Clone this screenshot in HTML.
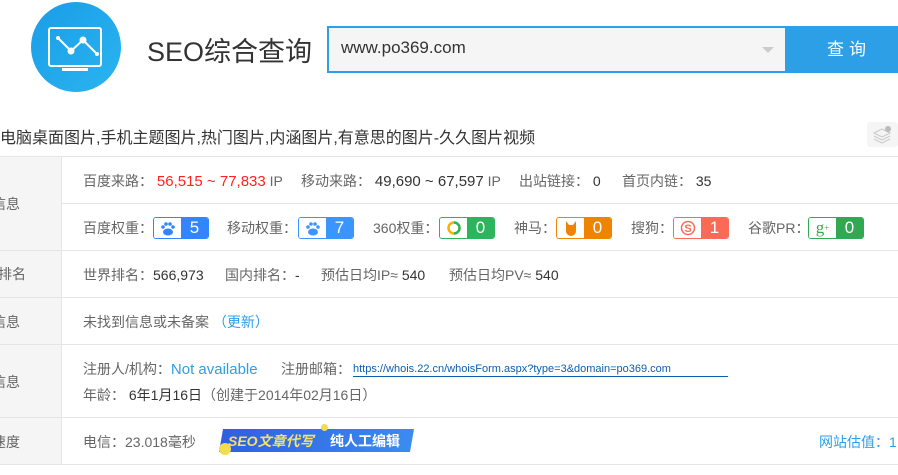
<!DOCTYPE html>
<html><head><meta charset="utf-8"><style>
*{margin:0;padding:0;box-sizing:border-box}
body{width:898px;height:475px;overflow:hidden;background:#fff;font-family:"Liberation Sans","Noto Sans CJK SC",sans-serif;color:#666;font-size:14px;position:relative}
.a{position:absolute;white-space:nowrap}
.hl{position:absolute;left:0;width:898px;height:1px;background:#e5e5e5}
.v{color:#333}
.badge{position:absolute;height:22px;width:56px;border:1px solid;border-radius:3px;overflow:hidden;display:flex}
.badge .i{width:27px;background:#fff;display:flex;align-items:center;justify-content:center}
.badge .n{flex:1;color:#fff;font-size:17px;text-align:center;line-height:20px}
.lab{position:absolute;font-size:14px;color:#666}
</style></head><body>
<!-- logo -->
<div class="a" style="left:31px;top:2px;width:90px;height:90px;border-radius:50%;background:linear-gradient(135deg,#1a9de8,#2ab4ef)"></div>
<svg class="a" style="left:31px;top:2px" width="90" height="90" viewBox="0 0 90 90">
<rect x="18" y="26" width="52" height="38" rx="2" fill="none" stroke="#fff" stroke-width="2"/>
<path d="M31 66h26v3H31z" fill="#fff"/>
<polyline points="27,36 40,49 52,38 66,52" fill="none" stroke="#fff" stroke-width="2"/>
<circle cx="27" cy="36" r="2" fill="#fff"/><circle cx="40" cy="49" r="3.5" fill="#fff"/><circle cx="52" cy="38" r="3.5" fill="#fff"/><circle cx="66" cy="52" r="2" fill="#fff"/>
</svg>
<div class="a" style="left:147px;top:30px;font-size:27px;color:#333">SEO综合查询</div>
<div class="a" style="left:327px;top:26px;width:462px;height:47px;border:2px solid #2d9fe6;background:#f5f5f5"></div>
<div class="a" style="left:341px;top:38px;font-size:17px;color:#333">www.po369.com</div>
<div class="a" style="left:762px;top:47px;width:0;height:0;border-left:6px solid transparent;border-right:6px solid transparent;border-top:6px solid #ccc"></div>
<div class="a" style="left:785px;top:26px;width:113px;height:47px;background:#2d9fe6;color:#fff;font-size:17px;line-height:47px;padding-left:42px;letter-spacing:5px">查询</div>
<div class="a" style="left:0;top:124px;font-size:16px;color:#333">电脑桌面图片,手机主题图片,热门图片,内涵图片,有意思的图片-久久图片视频</div>
<div class="a" style="left:867px;top:122px;width:31px;height:25px;background:#f5f5f5;border-radius:3px"></div>
<svg class="a" style="left:872px;top:125px" width="20" height="20" viewBox="0 0 20 20"><path d="M2 8l8-4 8 4-8 4z M2 11l8 4 8-4 M2 14l8 4 8-4" fill="none" stroke="#ccc" stroke-width="1.2"/><circle cx="16" cy="4" r="3" fill="#bbb"/></svg>
<!-- table -->
<div class="a" style="left:0;top:156px;width:62px;height:308px;background:#f5f5f5;border-right:1px solid #e5e5e5"></div>
<div class="hl" style="top:156px"></div>
<div class="hl" style="top:203px;left:62px"></div>
<div class="hl" style="top:250px"></div>
<div class="hl" style="top:297px"></div>
<div class="hl" style="top:344px"></div>
<div class="hl" style="top:417px"></div>
<div class="hl" style="top:464px"></div>
<div class="lab" style="left:-8px;top:194px">信息</div>
<div class="lab" style="left:-2px;top:264px">排名</div>
<div class="lab" style="left:-8px;top:312px">信息</div>
<div class="lab" style="left:-8px;top:372px">信息</div>
<div class="lab" style="left:-8px;top:432px">速度</div>
<!-- row1 -->
<div class="a" style="left:83px;top:171px">百度来路： <span style="color:#f22;font-size:15px">56,515 ~ 77,833</span> IP</div>
<div class="a" style="left:301px;top:171px">移动来路： <span class="v" style="font-size:15px">49,690 ~ 67,597</span> IP</div>
<div class="a" style="left:519px;top:171px">出站链接： <span class="v">0</span></div>
<div class="a" style="left:622px;top:171px">首页内链： <span class="v">35</span></div>
<!-- row2 -->
<div class="a" style="left:83px;top:218px">百度权重：</div>
<div class="badge" style="left:153px;top:217px;border-color:#3385ff"><div class="i"><svg width="16" height="15" viewBox="0 0 16 15"><ellipse cx="8" cy="11" rx="5" ry="3.5" fill="#3385ff"/><circle cx="3" cy="6" r="1.8" fill="#3385ff"/><circle cx="6" cy="3" r="1.8" fill="#3385ff"/><circle cx="10" cy="3" r="1.8" fill="#3385ff"/><circle cx="13" cy="6" r="1.8" fill="#3385ff"/></svg></div><div class="n" style="background:#3385ff">5</div></div>
<div class="a" style="left:227px;top:218px">移动权重：</div>
<div class="badge" style="left:298px;top:217px;border-color:#3a95ff"><div class="i"><svg width="16" height="15" viewBox="0 0 16 15"><ellipse cx="8" cy="11" rx="5" ry="3.5" fill="#3a95ff"/><circle cx="3" cy="6" r="1.8" fill="#3a95ff"/><circle cx="6" cy="3" r="1.8" fill="#3a95ff"/><circle cx="10" cy="3" r="1.8" fill="#3a95ff"/><circle cx="13" cy="6" r="1.8" fill="#3a95ff"/></svg></div><div class="n" style="background:#3a95ff">7</div></div>
<div class="a" style="left:373px;top:218px">360权重：</div>
<div class="badge" style="left:439px;top:217px;border-color:#2db55d"><div class="i"><svg width="16" height="16" viewBox="0 0 16 16"><circle cx="8" cy="8" r="5.5" fill="none" stroke="#f6b000" stroke-width="2.5"/><path d="M8 2.5a5.5 5.5 0 0 1 0 11" fill="none" stroke="#2db55d" stroke-width="2.5"/></svg></div><div class="n" style="background:#2db55d">0</div></div>
<div class="a" style="left:514px;top:218px">神马：</div>
<div class="badge" style="left:556px;top:217px;border-color:#f08300"><div class="i"><svg width="14" height="16" viewBox="0 0 14 16"><path d="M2 1l3 4h4l3-4v10a5 5 0 0 1-10 0z" fill="#f08300"/></svg></div><div class="n" style="background:#f08300">0</div></div>
<div class="a" style="left:631px;top:218px">搜狗：</div>
<div class="badge" style="left:673px;top:217px;border-color:#fb6a57"><div class="i"><svg width="16" height="16" viewBox="0 0 16 16"><circle cx="8" cy="8" r="6.5" fill="none" stroke="#fb6a57" stroke-width="1.5"/><text x="8" y="12" font-size="11" font-weight="bold" text-anchor="middle" fill="#fb6a57" font-family="Liberation Sans">S</text></svg></div><div class="n" style="background:#fb6a57">1</div></div>
<div class="a" style="left:748px;top:218px">谷歌PR：</div>
<div class="badge" style="left:808px;top:217px;border-color:#32a853"><div class="i" style="color:#32a853;font-family:'Liberation Serif',serif;font-size:17px">g<sup style="font-size:9px">+</sup></div><div class="n" style="background:#32a853">0</div></div>
<!-- row3 -->
<div class="a" style="left:83px;top:265px">世界排名：<span class="v">566,973</span></div>
<div class="a" style="left:225px;top:265px">国内排名：<span class="v">-</span></div>
<div class="a" style="left:321px;top:265px">预估日均IP≈ <span class="v">540</span></div>
<div class="a" style="left:449px;top:265px">预估日均PV≈ <span class="v">540</span></div>
<!-- row4 -->
<div class="a" style="left:83px;top:312px">未找到信息或未备案 <span style="color:#2d9fe6">（更新）</span></div>
<!-- row5 -->
<div class="a" style="left:83px;top:359px">注册人/机构：<span style="color:#2d9fe6;font-size:15px">Not available</span></div>
<div class="a" style="left:281px;top:359px">注册邮箱：</div>
<div class="a" style="left:353px;top:363px;font-size:11px;color:#0b5fae;border-bottom:1px solid #0b5fae;width:375px;line-height:13px">https://whois.22.cn/whoisForm.aspx?type=3&amp;domain=po369.com</div>
<div class="a" style="left:83px;top:385px">年龄： <span class="v">6年1月16日</span>（创建于2014年02月16日）</div>
<!-- row6 -->
<div class="a" style="left:83px;top:432px">电信：23.018毫秒</div>
<div class="a" style="left:221px;top:429px;width:191px;height:23px;background:linear-gradient(90deg,#2f5fe0,#3a8cf0);transform:skewX(-10deg)"></div>
<div class="a" style="left:228px;top:431px;font-size:14px;font-weight:bold;font-style:italic;color:#f6e06a">SEO文章代写</div>
<div class="a" style="left:330px;top:431px;font-size:14px;font-weight:bold;color:#fff">纯人工编辑</div>
<div class="a" style="left:219px;top:443px;width:12px;height:12px;border-radius:50%;background:#f2dc50"></div>
<div class="a" style="left:321px;top:424px;width:7px;height:7px;border-radius:50%;background:#f2dc50"></div>
<div class="a" style="left:819px;top:432px;color:#2d9fe6">网站估值：1</div>
</body></html>
